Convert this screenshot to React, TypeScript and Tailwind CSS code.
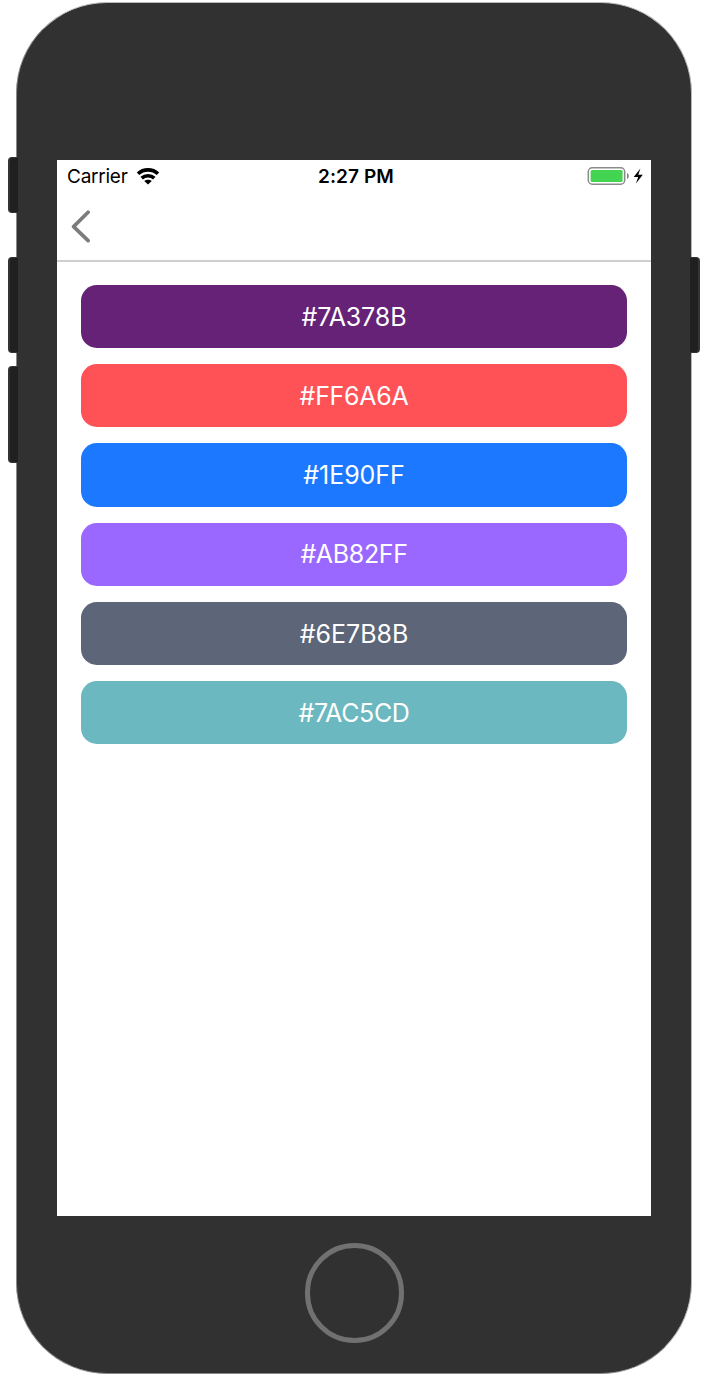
const swatches = [
  { label: "#7A378B", style: "bg-[#652276] tracking-[-0.1px]" },
  { label: "#FF6A6A", style: "bg-[#ff5257] tracking-[-0.3px]" },
  { label: "#1E90FF", style: "bg-[#1c79ff] tracking-[-0.05px]" },
  { label: "#AB82FF", style: "bg-[#9a68ff] tracking-[-0.35px]" },
  { label: "#6E7B8B", style: "bg-[#5c6678] tracking-[0px]" },
  { label: "#7AC5CD", style: "bg-[#6bb8c0] tracking-[-0.35px]" },
];

const sideButtons = [
  "left-[8px] top-[157px] h-[56px] rounded-l-[4px] border-l-2",
  "left-[8px] top-[257px] h-[96px] rounded-l-[4px] border-l-2",
  "left-[8px] top-[366px] h-[97px] rounded-l-[4px] border-l-2",
  "left-[690px] top-[257px] h-[96px] rounded-r-[4px] border-r-2",
];

function WifiIcon() {
  return (
    <svg className="mb-[2px] ml-[8px] h-[18px] w-[24px]" viewBox="0 0 24 18" fill="none" stroke="#000" strokeWidth="3.6">
      <path d="M2 6.8C7.5 1.6 16.5 1.6 22 6.8" />
      <path d="M5.7 11.2C9.2 8 14.8 8 18.3 11.2" />
      <path d="M12 17.6L8.2 14.1C10.4 12.3 13.6 12.3 15.8 14.1Z" fill="#000" stroke="none" />
    </svg>
  );
}

function BatteryIcon() {
  return (
    <svg className="mb-[1px] h-[20px] w-[58px]" viewBox="0 0 58 20">
      <rect x="1.3" y="1.8" width="36.4" height="16.4" rx="4" fill="#fff" stroke="#8b8b8b" strokeWidth="1.5" />
      <rect x="3.6" y="4" width="32" height="12" rx="1.5" fill="#43d551" />
      <path d="M40 7C42.4 7.8 42.4 12.2 40 13Z" fill="#858585" />
      <path d="M53.4 2.5L46.7 11H51.2L48.9 17.5L55.8 8.8H51.3Z" fill="#000" />
    </svg>
  );
}

export default function App() {
  return (
    <div className="relative h-[1376px] w-[708px] overflow-hidden bg-white px-[16px] pt-[2px] font-['Inter',sans-serif]">
      <main className="flex h-[1372px] w-[676px] flex-col items-center rounded-[91px] border border-[#898989] border-t-[#b9bbbc] border-r-[#b9b9b9] bg-[#313131] pt-[157px]">
        <section className="h-[1056px] w-[594px] shrink-0 bg-white">
          <header className="h-[102px] border-b-2 border-[#cfcfcf]">
            <div className="grid h-[33px] grid-cols-3 items-center pl-[10px] pr-[6px] text-[19px] leading-none text-black">
              <div className="flex items-center tracking-[-0.25px]">
                Carrier
                <WifiIcon />
              </div>
              <time className="text-center font-semibold tracking-[0.1px]">2:27 PM</time>
              <div className="flex justify-end">
                <BatteryIcon />
              </div>
            </div>
            <button aria-label="Back" className="ml-[14px] mt-[16px] block">
              <svg className="h-[34px] w-[20px]" viewBox="0 0 20 34" fill="none" stroke="#7c7c7c" strokeWidth="3.7" strokeLinecap="round" strokeLinejoin="round">
                <path d="M17.1 3.3L2.6 17.6L17.1 31.6" />
              </svg>
            </button>
          </header>
          <div className="flex flex-col gap-[15.9px] px-[23.7px] pt-[23px]">
            {swatches.map(({ label, style }) => (
              <button
                key={label}
                className={`flex h-[63.3px] w-full items-center justify-center rounded-[15.8px] pt-[2px] text-[25px] text-white ${style}`}
              >
                {label}
              </button>
            ))}
          </div>
        </section>
        <button aria-label="Home" className="ml-[0.6px] mt-[27px] size-[99.5px] shrink-0 rounded-full border-[5px] border-[#717171]" />
      </main>
      {sideButtons.map((position) => (
        <div key={position} className={`absolute w-[10px] border-y border-[#343434] bg-[#202020] ${position}`} />
      ))}
    </div>
  );
}
